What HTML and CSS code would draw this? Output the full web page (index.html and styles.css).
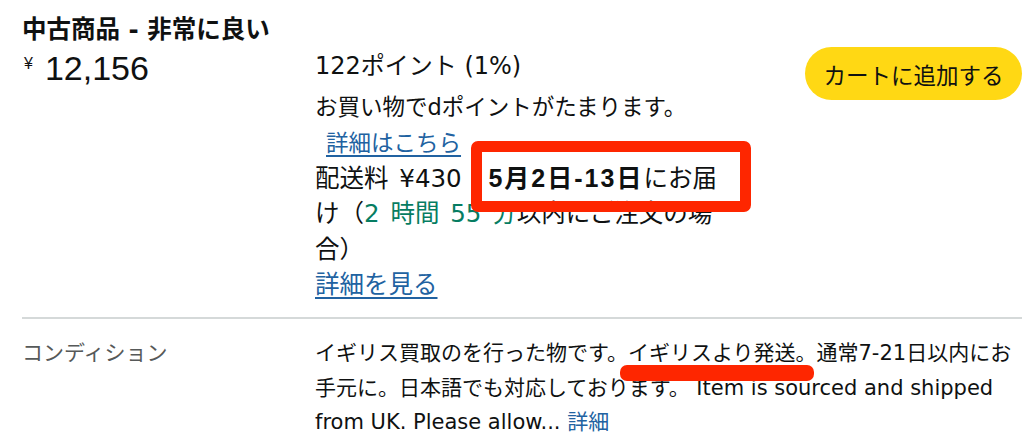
FILE: index.html
```html
<!DOCTYPE html>
<html lang="ja">
<head>
<meta charset="utf-8">
<title>中古商品</title>
<link rel="stylesheet" href="styles.css">
</head>
<body>
<div class="page">
  <h1 class="title">中古商品 - 非常に良い</h1>
  <div class="offer">
    <div class="price"><span class="sym">¥</span><span class="whole">12,156</span></div>
    <div class="details">
      <p class="points">122ポイント (1%)</p>
      <p class="dpoint">お買い物でdポイントがたまります。</p>
      <p class="more"><a class="link" href="#">詳細はこちら</a></p>
      <p class="delivery">配送料 ¥430 <b class="date">5月2日-13日</b>にお届け（<span class="green">2 時間 55 分</span>以内にご注文の場合）<br><a class="link" href="#">詳細を見る</a></p>
      <div class="mark-box"></div>
    </div>
    <button class="cart">カートに追加する</button>
  </div>
  <div class="condition">
    <div class="label">コンディション</div>
    <div class="cond-text">イギリス買取のを行った物です。イギリスより発送。通常7-21日以内にお手元に。日本語でも対応しております。 Item is sourced and shipped from UK. Please allow... <a class="plain-link" href="#">詳細</a>
      <div class="mark-line"></div>
    </div>
  </div>
</div>
</body>
</html>
```

FILE: styles.css
```css
html, body {
  margin: 0;
  padding: 0;
  background: #ffffff;
}
body {
  font-family: "DejaVu Sans", "Noto Sans CJK JP", sans-serif;
  color: #0f1111;
}
.page {
  padding: 15px 2px 0 22px;
}
.title {
  margin: 0;
  font-size: 24.5px;
  line-height: 30px;
  font-weight: 700;
}
.offer {
  display: grid;
  grid-template-columns: 293px 415px 1fr;
  margin-top: 3px;
  padding-bottom: 15px;
  border-bottom: 2px solid #d5d9d9;
}
.price {
  display: flex;
  align-items: flex-start;
  line-height: 40px;
  font-family: "Liberation Sans", "Noto Sans CJK JP", sans-serif;
}
.sym {
  font-size: 16px;
  line-height: 16px;
  margin-top: 8px;
  margin-left: 2px;
  margin-right: 12px;
}
.whole {
  font-size: 34px;
}
.details {
  position: relative;
}
.details p {
  margin: 0;
}
.points {
  font-size: 24px;
  line-height: 36px;
}
.details .dpoint {
  font-size: 22.5px;
  line-height: 36px;
  margin-top: 5px;
}
.more {
  font-size: 22.5px;
  line-height: 36px;
  padding-left: 11px;
}
.link {
  color: #2162a1;
  text-decoration: underline;
  text-underline-offset: 4px;
  text-decoration-thickness: 1.5px;
}
.delivery {
  font-size: 24.5px;
  line-height: 35.3px;
  word-spacing: 3px;
}
.date {
  font-family: "Liberation Sans", "Noto Sans CJK JP", sans-serif;
  font-size: 25px;
  font-weight: 700;
  letter-spacing: 2px;
  margin-left: 16px;
}
.green {
  color: #067d62;
}
.mark-box {
  position: absolute;
  left: 156px;
  top: 93px;
  width: 258px;
  height: 49px;
  border: 11.5px solid #fe2600;
  border-radius: 7px;
}
.cart {
  justify-self: end;
  align-self: start;
  width: 217px;
  height: 53px;
  margin-top: -1px;
  border: none;
  border-radius: 27px;
  background: #ffd814;
  color: #0f1111;
  font-family: "DejaVu Sans", "Noto Sans CJK JP", sans-serif;
  font-size: 22.5px;
  padding: 0;
}
.condition {
  display: grid;
  grid-template-columns: 293px 1fr;
  padding-top: 17px;
  font-size: 21px;
  line-height: 34.5px;
}
.label {
  color: #565959;
}
.cond-text {
  position: relative;
}
.plain-link {
  color: #2162a1;
  text-decoration: none;
}
.mark-line {
  position: absolute;
  left: 305px;
  top: 29px;
  width: 194px;
  height: 16px;
  border-radius: 7px;
  background: #fe2600;
}
```
